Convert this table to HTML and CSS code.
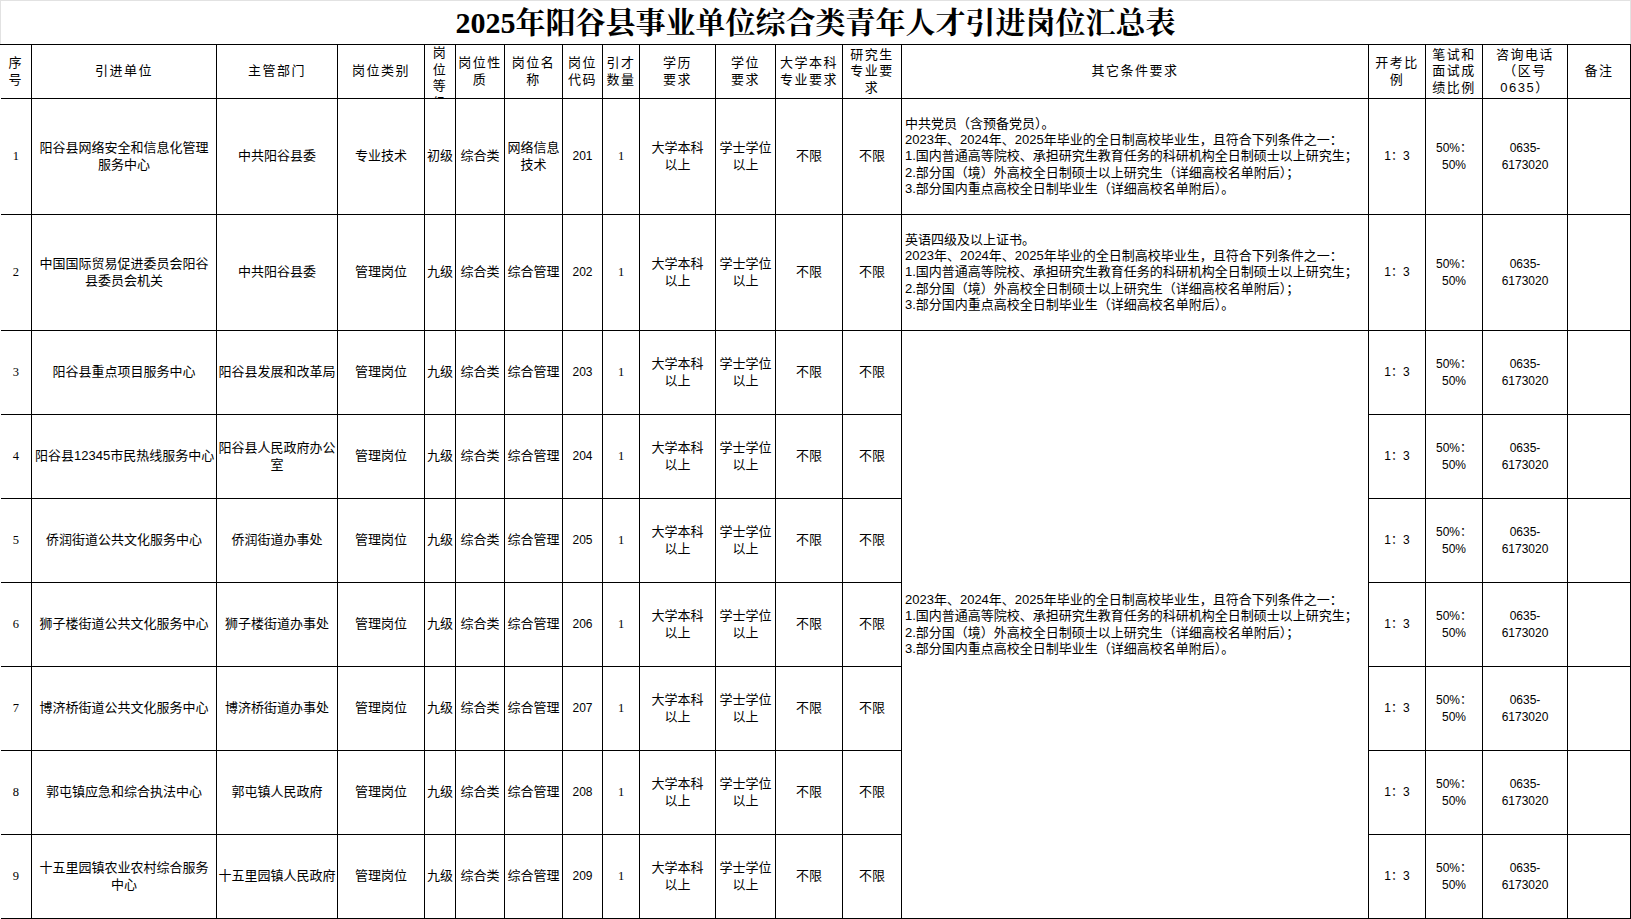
FILE: index.html
```html
<!DOCTYPE html>
<html lang="zh-CN">
<head>
<meta charset="utf-8">
<title>2025年阳谷县事业单位综合类青年人才引进岗位汇总表</title>
<link rel="stylesheet" href="styles.css">
</head>
<body>
<table class="sheet">
  <colgroup>
    <col class="w-xh"><col class="w-dw"><col class="w-bm"><col class="w-lb"><col class="w-dj"><col class="w-xz">
    <col class="w-mc"><col class="w-dm"><col class="w-sl"><col class="w-xl"><col class="w-xw"><col class="w-bk">
    <col class="w-yjs"><col class="w-qt"><col class="w-bl"><col class="w-cj"><col class="w-dh"><col class="w-bz">
  </colgroup>
  <tr class="row-title">
    <td class="title" colspan="18">2025年阳谷县事业单位综合类青年人才引进岗位汇总表</td>
  </tr>
  <tr class="row-head">
    <th class="first">序号</th>
    <th>引进单位</th>
    <th>主管部门</th>
    <th>岗位类别</th>
    <th class="top"><div class="clip">岗位等级</div></th>
    <th>岗位性质</th>
    <th>岗位名称</th>
    <th>岗位代码</th>
    <th>引才数量</th>
    <th>学历<br>要求</th>
    <th>学位<br>要求</th>
    <th>大学本科专业要求</th>
    <th>研究生专业要求</th>
    <th>其它条件要求</th>
    <th>开考比例</th>
    <th>笔试和面试成绩比例</th>
    <th>咨询电话<br>（区号<br>0635）</th>
    <th>备注</th>
  </tr>
  <tr class="row-tall">
    <td class="first sn">1</td>
    <td>阳谷县网络安全和信息化管理服务中心</td>
    <td>中共阳谷县委</td>
    <td>专业技术</td>
    <td>初级</td>
    <td>综合类</td>
    <td>网络信息技术</td>
    <td class="num">201</td>
    <td class="sn">1</td>
    <td>大学本科<br>以上</td>
    <td>学士学位以上</td>
    <td>不限</td>
    <td>不限</td>
    <td class="cond">中共党员（含预备党员）。<br>2023年、2024年、2025年毕业的全日制高校毕业生，且符合下列条件之一：<br>1.国内普通高等院校、承担研究生教育任务的科研机构全日制硕士以上研究生；<br>2.部分国（境）外高校全日制硕士以上研究生（详细高校名单附后）；<br>3.部分国内重点高校全日制毕业生（详细高校名单附后）。</td>
    <td class="num">1：3</td>
    <td class="num">50%：<br>50%</td>
    <td class="num">0635-<br>6173020</td>
    <td></td>
  </tr>
  <tr class="row-tall">
    <td class="first sn">2</td>
    <td>中国国际贸易促进委员会阳谷县委员会机关</td>
    <td>中共阳谷县委</td>
    <td>管理岗位</td>
    <td>九级</td>
    <td>综合类</td>
    <td>综合管理</td>
    <td class="num">202</td>
    <td class="sn">1</td>
    <td>大学本科<br>以上</td>
    <td>学士学位以上</td>
    <td>不限</td>
    <td>不限</td>
    <td class="cond">英语四级及以上证书。<br>2023年、2024年、2025年毕业的全日制高校毕业生，且符合下列条件之一：<br>1.国内普通高等院校、承担研究生教育任务的科研机构全日制硕士以上研究生；<br>2.部分国（境）外高校全日制硕士以上研究生（详细高校名单附后）；<br>3.部分国内重点高校全日制毕业生（详细高校名单附后）。</td>
    <td class="num">1：3</td>
    <td class="num">50%：<br>50%</td>
    <td class="num">0635-<br>6173020</td>
    <td></td>
  </tr>
  <tr class="row-std">
    <td class="first sn">3</td>
    <td>阳谷县重点项目服务中心</td>
    <td>阳谷县发展和改革局</td>
    <td>管理岗位</td>
    <td>九级</td>
    <td>综合类</td>
    <td>综合管理</td>
    <td class="num">203</td>
    <td class="sn">1</td>
    <td>大学本科<br>以上</td>
    <td>学士学位以上</td>
    <td>不限</td>
    <td>不限</td>
    <td class="cond" rowspan="7">2023年、2024年、2025年毕业的全日制高校毕业生，且符合下列条件之一：<br>1.国内普通高等院校、承担研究生教育任务的科研机构全日制硕士以上研究生；<br>2.部分国（境）外高校全日制硕士以上研究生（详细高校名单附后）；<br>3.部分国内重点高校全日制毕业生（详细高校名单附后）。</td>
    <td class="num">1：3</td>
    <td class="num">50%：<br>50%</td>
    <td class="num">0635-<br>6173020</td>
    <td></td>
  </tr>
  <tr class="row-std">
    <td class="first sn">4</td>
    <td class="nw">阳谷县12345市民热线服务中心</td>
    <td>阳谷县人民政府办公室</td>
    <td>管理岗位</td>
    <td>九级</td>
    <td>综合类</td>
    <td>综合管理</td>
    <td class="num">204</td>
    <td class="sn">1</td>
    <td>大学本科<br>以上</td>
    <td>学士学位以上</td>
    <td>不限</td>
    <td>不限</td>
    <td class="num">1：3</td>
    <td class="num">50%：<br>50%</td>
    <td class="num">0635-<br>6173020</td>
    <td></td>
  </tr>
  <tr class="row-std">
    <td class="first sn">5</td>
    <td>侨润街道公共文化服务中心</td>
    <td>侨润街道办事处</td>
    <td>管理岗位</td>
    <td>九级</td>
    <td>综合类</td>
    <td>综合管理</td>
    <td class="num">205</td>
    <td class="sn">1</td>
    <td>大学本科<br>以上</td>
    <td>学士学位以上</td>
    <td>不限</td>
    <td>不限</td>
    <td class="num">1：3</td>
    <td class="num">50%：<br>50%</td>
    <td class="num">0635-<br>6173020</td>
    <td></td>
  </tr>
  <tr class="row-std">
    <td class="first sn">6</td>
    <td>狮子楼街道公共文化服务中心</td>
    <td>狮子楼街道办事处</td>
    <td>管理岗位</td>
    <td>九级</td>
    <td>综合类</td>
    <td>综合管理</td>
    <td class="num">206</td>
    <td class="sn">1</td>
    <td>大学本科<br>以上</td>
    <td>学士学位以上</td>
    <td>不限</td>
    <td>不限</td>
    <td class="num">1：3</td>
    <td class="num">50%：<br>50%</td>
    <td class="num">0635-<br>6173020</td>
    <td></td>
  </tr>
  <tr class="row-std">
    <td class="first sn">7</td>
    <td>博济桥街道公共文化服务中心</td>
    <td>博济桥街道办事处</td>
    <td>管理岗位</td>
    <td>九级</td>
    <td>综合类</td>
    <td>综合管理</td>
    <td class="num">207</td>
    <td class="sn">1</td>
    <td>大学本科<br>以上</td>
    <td>学士学位以上</td>
    <td>不限</td>
    <td>不限</td>
    <td class="num">1：3</td>
    <td class="num">50%：<br>50%</td>
    <td class="num">0635-<br>6173020</td>
    <td></td>
  </tr>
  <tr class="row-std">
    <td class="first sn">8</td>
    <td>郭屯镇应急和综合执法中心</td>
    <td>郭屯镇人民政府</td>
    <td>管理岗位</td>
    <td>九级</td>
    <td>综合类</td>
    <td>综合管理</td>
    <td class="num">208</td>
    <td class="sn">1</td>
    <td>大学本科<br>以上</td>
    <td>学士学位以上</td>
    <td>不限</td>
    <td>不限</td>
    <td class="num">1：3</td>
    <td class="num">50%：<br>50%</td>
    <td class="num">0635-<br>6173020</td>
    <td></td>
  </tr>
  <tr class="row-std">
    <td class="first sn">9</td>
    <td>十五里园镇农业农村综合服务中心</td>
    <td>十五里园镇人民政府</td>
    <td>管理岗位</td>
    <td>九级</td>
    <td>综合类</td>
    <td>综合管理</td>
    <td class="num">209</td>
    <td class="sn">1</td>
    <td>大学本科<br>以上</td>
    <td>学士学位以上</td>
    <td>不限</td>
    <td>不限</td>
    <td class="num">1：3</td>
    <td class="num">50%：<br>50%</td>
    <td class="num">0635-<br>6173020</td>
    <td></td>
  </tr>
</table>
</body>
</html>
```
FILE: styles.css
```css
html, body {
  margin: 0;
  padding: 0;
  background: #fff;
}
body {
  font-family: "Liberation Sans", "Noto Sans CJK SC", sans-serif;
  font-size: 13px;
  color: #000;
}
.sheet {
  border-collapse: collapse;
  table-layout: fixed;
  width: 1631px;
}
.w-xh { width: 31px; }
.w-dw { width: 185px; }
.w-bm { width: 121px; }
.w-lb { width: 87px; }
.w-dj { width: 31px; }
.w-xz { width: 49px; }
.w-mc { width: 58px; }
.w-dm { width: 40px; }
.w-sl { width: 37px; }
.w-xl { width: 76px; }
.w-xw { width: 60px; }
.w-bk { width: 67px; }
.w-yjs { width: 59px; }
.w-qt { width: 467px; }
.w-bl { width: 57px; }
.w-cj { width: 57px; }
.w-dh { width: 85px; }
.w-bz { width: 63px; }

.sheet td, .sheet th {
  border: 1px solid #000;
  padding: 0 2px;
  text-align: center;
  vertical-align: middle;
  line-height: 16.5px;
  font-weight: normal;
  overflow: hidden;
}
.sheet th {
  letter-spacing: 1.5px;
}
.sheet td:nth-child(2) {
  padding: 0 3px;
}
.sheet .row-std td:nth-child(3),
.sheet .row-tall td:nth-child(3) {
  padding: 0 1px;
}
.sheet .first {
  border-left: 0;
}
.row-title { height: 44px; }
.row-head { height: 54px; }
.row-tall { height: 116px; }
.row-std { height: 84px; }

.sheet .title {
  border-top: 1px solid #e2e2e2;
  border-left: 1px solid #e2e2e2;
  border-right: 1px solid #e2e2e2;
  padding: 0;
  font-family: "Liberation Serif", "Noto Serif CJK SC", "Noto Sans CJK SC", serif;
  font-weight: bold;
  font-size: 30px;
  line-height: 40px;
}
.sheet th.top {
  vertical-align: top;
}
.clip {
  height: 53px;
  overflow: hidden;
  line-height: 16.5px;
}
.sheet .cond {
  text-align: left;
  padding: 0 3px;
  font-size: 13px;
  line-height: 16.3px;
  white-space: nowrap;
}
.sheet .num {
  font-size: 12px;
}
.sheet .sn {
  font-family: "Liberation Serif", "Noto Sans CJK SC", serif;
  font-size: 12.5px;
}
.sheet .nw {
  white-space: nowrap;
}
```
